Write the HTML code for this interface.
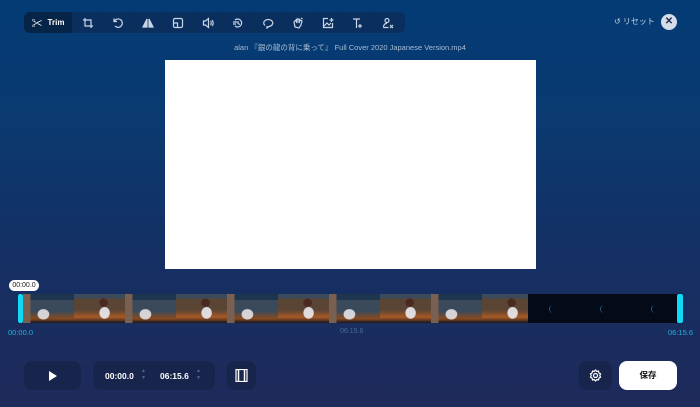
<!DOCTYPE html>
<html><head><meta charset="utf-8"><style>
*{margin:0;padding:0;box-sizing:border-box}
body{width:700px;height:407px;overflow:hidden;position:relative;font-family:"Liberation Sans","Noto Sans CJK JP",sans-serif;background:linear-gradient(180deg,#043b75 0%,#0a3a70 30%,#152f63 65%,#1e2a5a 100%);color:#fff}
.abs{position:absolute}
.tb{left:24px;top:12px;width:381px;height:21px;background:#0a2f5e;border-radius:6px;display:flex}
.tb div{width:30px;height:21px;border-right:1px solid #083056;display:flex;align-items:center;justify-content:center}
.tb .trim{width:49px;background:#062448;border-radius:6px 0 0 6px;font-size:8px;font-weight:bold;gap:5px}
svg{stroke:#c9d6e6;fill:none;stroke-width:1.2}
.thumbs{left:23px;top:294px;width:505px;height:29px;display:flex;overflow:hidden}
.th{width:51px;height:29px;flex:none;background:
radial-gradient(ellipse 8px 9px at 60% 65%,rgba(235,235,240,.9) 60%,transparent 70%),
radial-gradient(circle 5px at 58% 30%,#4a2a20 80%,transparent 90%),
linear-gradient(180deg,#3a4a5a 0 15%,#5a4535 15% 55%,#a85a25 80%,#161620 100%)}
.th:nth-child(odd){background:
radial-gradient(ellipse 9px 8px at 40% 70%,rgba(235,235,240,.85) 60%,transparent 70%),
linear-gradient(90deg,#7a6050 0 15%,transparent 15%),
linear-gradient(180deg,#1e3550 0 20%,#3b4a5a 20% 60%,#8a4a20 85%,#151520 100%)}
.box{background:#17244c;border-radius:8px}
.sp{width:8px;height:8px;border-radius:50%;border-left:1px solid #1d5a80;top:305px}
</style></head><body>
<div class="abs tb">
<div class="trim"><span style="font-size:11px">✂</span>Trim</div>
<div><svg width="12" height="12"><path d="M3 1v8h8M1 3h8v8"/></svg></div>
<div><svg width="12" height="12"><path d="M2.5 4A4.2 4.2 0 1 1 3 9M2 1.5v3h3"/></svg></div>
<div><svg width="12" height="12"><path d="M5 2L1 10h4zM7 2l4 8H7z" style="fill:#c9d6e6"/></svg></div>
<div><svg width="12" height="12"><rect x="1.5" y="1.5" width="9" height="9" rx="1.5"/><path d="M1.5 6h4v4.5"/></svg></div>
<div><svg width="12" height="12"><path d="M1.5 4h2l3-2.5v9l-3-2.5h-2zM8.5 4c1 1 1 3 0 4M10 3c1.6 1.6 1.6 4.4 0 6"/></svg></div>
<div><svg width="12" height="12"><path d="M3 3a4 4 0 1 1 0 6M1 5h4M1 7h3M6 4v2.5l2 1"/></svg></div>
<div><svg width="12" height="12"><path d="M3 8.5A4.5 3.5 0 1 1 7 9.5l-2 1.5v-2"/></svg></div>
<div><svg width="12" height="12"><path d="M3 10l-1-5 2-2 1 3V2l2 0v4l1-3 2 1-1 4-2 3zM9 1l1.5 1"/></svg></div>
<div><svg width="12" height="12"><path d="M10.5 6v4.5h-9v-9H6M2 9l3-3 2 2 2-2M9.5 1v4M7.5 3h4"/></svg></div>
<div><svg width="12" height="12"><path d="M1 2h7M4.5 2v9M8 7v4M6 9h4"/></svg></div>
<div style="border:none"><svg width="12" height="12"><circle cx="5" cy="3.5" r="2"/><path d="M1.5 10.5c0-3 1.5-4 3.5-4M1.5 10.5h5M8 8l3 3M11 8l-3 3"/></svg></div>
</div>
<div class="abs" style="left:614px;top:16px;font-size:8px;color:#c5d2e2">↺ リセット</div>
<div class="abs" style="left:661px;top:14px;width:16px;height:16px;border-radius:50%;background:#d6dde8;color:#1a2a4a;font-size:10px;font-weight:bold;text-align:center;line-height:16px">✕</div>
<div class="abs" style="left:0;width:700px;top:42px;text-align:center;font-size:7.5px;color:#a8bbd3">alan 『銀の龍の背に乗って』 Full Cover 2020 Japanese Version.mp4</div>
<div class="abs" style="left:165px;top:60px;width:371px;height:209px;background:#fff"></div>
<div class="abs" style="left:9px;top:280px;width:30px;height:11px;background:#fff;border-radius:6px;color:#222;font-size:7px;text-align:center;line-height:11px">00:00.0</div>
<div class="abs" style="left:18px;top:294px;width:665px;height:29px;background:#050a18"></div>
<div class="abs thumbs"><div class="th"></div><div class="th"></div><div class="th"></div><div class="th"></div><div class="th"></div><div class="th"></div><div class="th"></div><div class="th"></div><div class="th"></div><div class="th"></div></div>
<div class="abs sp" style="left:549px"></div><div class="abs sp" style="left:600px"></div><div class="abs sp" style="left:651px"></div>
<div class="abs" style="left:18px;top:294px;width:5px;height:29px;background:#10d8f5;border-radius:2px"></div>
<div class="abs" style="left:677px;top:294px;width:6px;height:29px;background:#10d8f5;border-radius:2px"></div>
<div class="abs" style="left:8px;top:328px;font-size:7.5px;color:#1ab4e0">00:00.0</div>
<div class="abs" style="left:340px;top:328px;font-size:7px;color:#4a6a92">06:15.6</div>
<div class="abs" style="left:668px;top:328px;font-size:7.5px;color:#1ab4e0">06:15.6</div>
<div class="abs box" style="left:24px;top:361px;width:57px;height:29px"><svg class="abs" style="left:24px;top:10px" width="10" height="10"><path d="M1 0L9 5L1 10z" style="fill:#fff;stroke:none"/></svg></div>
<div class="abs box" style="left:93px;top:361px;width:122px;height:29px;font-size:8.5px;font-weight:bold">
<span class="abs" style="left:12px;top:10px">00:00.0</span><span class="abs" style="left:48px;top:7px;font-size:5px;color:#55658a;line-height:7px">▲<br>▼</span>
<span class="abs" style="left:67px;top:10px">06:15.6</span><span class="abs" style="left:103px;top:7px;font-size:5px;color:#55658a;line-height:7px">▲<br>▼</span></div>
<div class="abs box" style="left:227px;top:361px;width:29px;height:29px"><svg class="abs" style="left:8px;top:8px" width="13" height="13"><rect x="1" y="0.5" width="11" height="12" style="stroke:#fff"/><path d="M3.5 0.5v12M9.5 0.5v12" style="stroke:#fff;stroke-width:1.5"/></svg></div>
<div class="abs box" style="left:579px;top:361px;width:33px;height:29px"><svg class="abs" style="left:10px;top:8px" width="13" height="13"><circle cx="6.5" cy="6.5" r="2" style="stroke:#fff"/><path d="M6.5 1l1.2 1.4 1.8-.3.4 1.8 1.6.9-.7 1.7.7 1.7-1.6.9-.4 1.8-1.8-.3-1.2 1.4-1.2-1.4-1.8.3-.4-1.8-1.6-.9.7-1.7-.7-1.7 1.6-.9.4-1.8 1.8.3z" style="stroke:#fff"/></svg></div>
<div class="abs" style="left:619px;top:361px;width:58px;height:29px;background:#fff;border-radius:8px;color:#111;font-size:8.5px;font-weight:bold;text-align:center;line-height:29px">保存</div>
</body></html>
